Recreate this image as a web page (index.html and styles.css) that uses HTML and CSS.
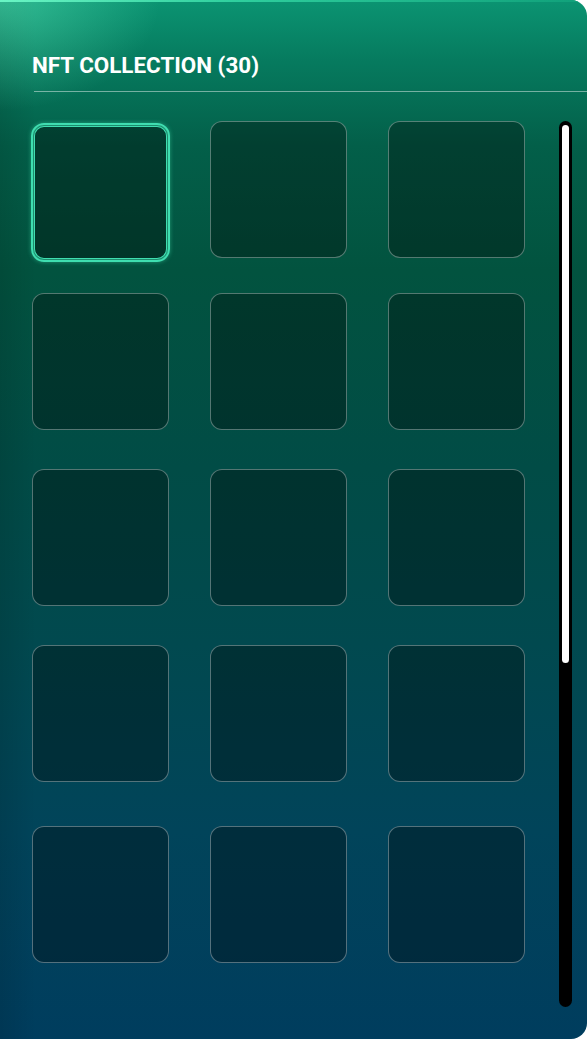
FILE: index.html
```html
<!DOCTYPE html>
<html>
<head>
<meta charset="utf-8">
<link rel="stylesheet" href="styles.css">
</head>
<body>
<section class="panel">
  <h1 class="title">NFT COLLECTION (30)</h1>
  <div class="divider"></div>
  <div class="body">
    <div class="grid">
      <div class="card selected"></div>
      <div class="card"></div>
      <div class="card"></div>
      <div class="card"></div>
      <div class="card"></div>
      <div class="card"></div>
      <div class="card"></div>
      <div class="card"></div>
      <div class="card"></div>
      <div class="card"></div>
      <div class="card"></div>
      <div class="card"></div>
      <div class="card"></div>
      <div class="card"></div>
      <div class="card"></div>
    </div>
    <div class="scrollbar"><div class="thumb"></div></div>
  </div>
</section>
</body>
</html>
```

FILE: styles.css
```css
html, body {
  margin: 0;
  padding: 0;
  background: #ffffff;
}

.panel {
  position: relative;
  width: 587px;
  height: 1039px;
  box-sizing: border-box;
  border-radius: 0 16px 16px 0;
  overflow: hidden;
  padding: 53px 0 0 32px;
  background:
    radial-gradient(ellipse 160px 110px at 0 0, rgba(110, 250, 200, 0.4), rgba(110, 250, 200, 0) 100%),
    linear-gradient(90deg, rgba(0, 0, 0, 0.1) 0px, rgba(0, 0, 0, 0) 36px),
    linear-gradient(180deg, #0b9472 0%, #067a5e 6%, #035f49 14%, #02533f 26%, #014c46 45%, #01494f 62%, #01445a 80%, #003d5e 100%);
  font-family: Roboto, "Liberation Sans", sans-serif;
}

.panel::before {
  content: "";
  position: absolute;
  left: 0;
  top: 0;
  right: 0;
  height: 2px;
  background: linear-gradient(90deg, #6af5c4 0%, #2fcf9e 40%, #10a07a 100%);
}

.title {
  margin: 0;
  font-size: 22.4px;
  line-height: 24px;
  font-weight: 700;
  color: #ffffff;
  letter-spacing: 0;
}

.divider {
  margin: 14px 0 0 2px;
  height: 1px;
  background: rgba(255, 255, 255, 0.45);
}

.body {
  display: flex;
  align-items: flex-start;
  margin-top: 29px;
}

.grid {
  display: grid;
  grid-template-columns: repeat(3, 137px);
  grid-template-rows: 172px 176px 176px 181px 137px;
  column-gap: 41px;
  align-items: start;
}

.card {
  width: 137px;
  height: 137px;
  box-sizing: border-box;
  border: 1px solid rgba(255, 255, 255, 0.33);
  border-radius: 12px;
  background: rgba(0, 0, 0, 0.33);
}

.card.selected {
  width: 139px;
  height: 139px;
  margin: 2px 0 0 -1px;
  border: 2px solid #3fdeb0;
  border-radius: 13px;
  background: rgba(0, 0, 0, 0.36);
  box-shadow:
    inset 0 0 0 1px #1c8c6c,
    inset 0 0 0 2px #3fdeb0,
    0 0 4px rgba(70, 230, 180, 0.45);
}

.scrollbar {
  width: 13px;
  height: 886px;
  margin-left: 34px;
  box-sizing: border-box;
  padding: 4px 3px;
  background: #000000;
  border-radius: 7px;
}

.thumb {
  width: 7px;
  height: 538px;
  background: #ffffff;
  border-radius: 4px;
}
```
